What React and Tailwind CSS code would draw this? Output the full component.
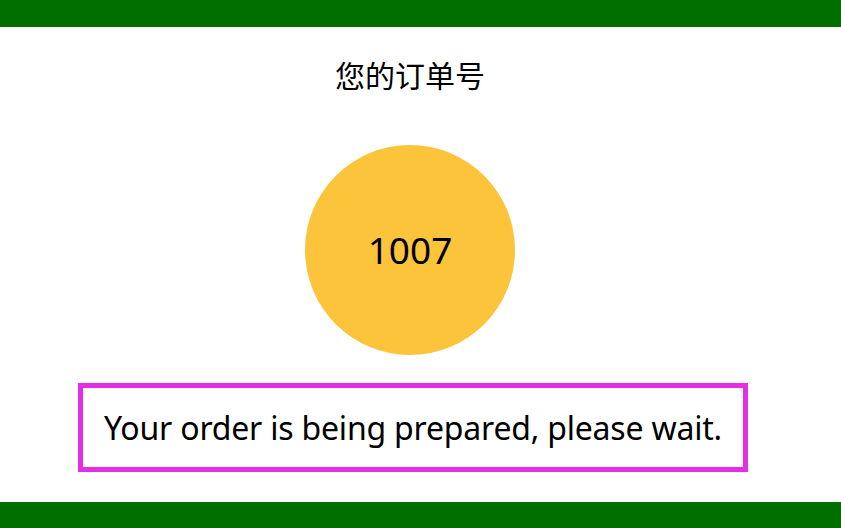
import React from 'react';

const App = () => {
    const orderNo = '1007';

    return (
        <main className="flex flex-col w-[841px] h-[528px] bg-white overflow-hidden" style={{ fontFamily: '"Segoe UI", "Noto Sans", "Noto Sans CJK SC", sans-serif' }}>
            <div className="h-[27px] bg-[#006f00] shrink-0"></div>

            <div className="flex flex-col items-center w-[820px] flex-1">
                <h1 className="mt-[29px] text-[30px] leading-[40px] text-black">您的订单号</h1>

                <div className="mt-[49px] flex items-center justify-center w-[210px] h-[210px] rounded-full bg-[#fcc43a]">
                    <span className="text-[37px] text-black">{orderNo}</span>
                </div>

                <div className="mt-[28px] flex items-center justify-center w-[670px] h-[89px] ml-[6px] border-[5px] border-[#e62de6]">
                    <p className="text-[32px] tracking-[-0.2px] text-black">Your order is being prepared, please wait.</p>
                </div>
            </div>

            <div className="h-[26px] bg-[#006f00] shrink-0"></div>
        </main>
    );
};

export default App;
